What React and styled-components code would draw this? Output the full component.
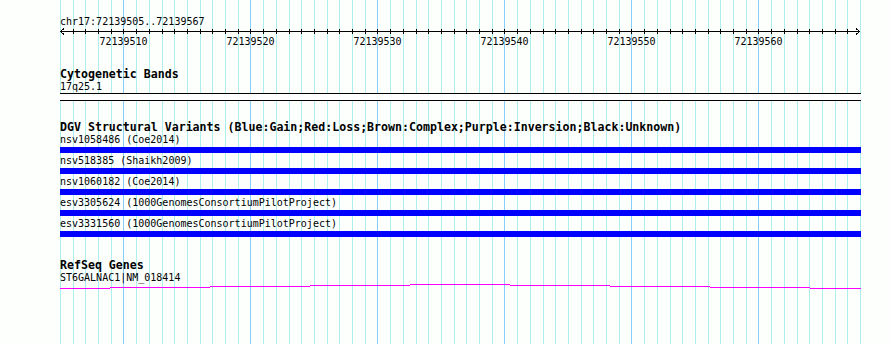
import React from 'react';
import styled, { createGlobalStyle } from 'styled-components';

const GlobalStyle = createGlobalStyle`
	html, body {
		margin: 0;
		padding: 0;
		background: #fdfffd;
	}
`;

// view: 63 bases drawn over 800px starting at x=60
const LEFT = 60;
const SPAN = 800;
const BASES = 63;
const START = 72139505;

const baseX = i => Math.round((i * SPAN) / BASES);

const variants = [
	{ id: 'nsv1058486', study: 'Coe2014' },
	{ id: 'nsv518385', study: 'Shaikh2009' },
	{ id: 'nsv1060182', study: 'Coe2014' },
	{ id: 'esv3305624', study: '1000GenomesConsortiumPilotProject' },
	{ id: 'esv3331560', study: '1000GenomesConsortiumPilotProject' },
];

// intron line steps (x from, x to, y offset)
const geneSteps = [
	[60, 110, 4],
	[110, 210, 3],
	[210, 310, 2],
	[310, 410, 1],
	[410, 510, 0],
	[510, 610, 1],
	[610, 710, 2],
	[710, 810, 3],
	[810, 861, 4],
];

const Grid = () => {
	const lines = [];
	for (let i = 0; i <= BASES; i++) {
		const major = (START + i) % 10 === 0;
		const x = LEFT + baseX(i) + 0.5;
		lines.push(
			<line
				key={i}
				x1={x}
				x2={x}
				y1={0}
				y2={344}
				stroke={major ? '#87cefa' : '#afeeee'}
				strokeWidth={1}
			/>
		);
	}
	return (
		<GridLayer width="890" height="344" shapeRendering="crispEdges">
			{lines}
		</GridLayer>
	);
};

const Ruler = () => {
	const ticks = [];
	const labels = [];
	for (let i = 1; i < BASES; i++) {
		const x = baseX(i) + 0.5;
		ticks.push(<line key={i} x1={x} x2={x} y1={1} y2={6} stroke="#000" />);
		if ((START + i) % 10 === 0) {
			labels.push(
				<RulerLabel key={i} x={x} y={17} textAnchor="middle">
					{START + i}
				</RulerLabel>
			);
		}
	}
	return (
		<RulerSvg width="802" height="20" shapeRendering="crispEdges">
			<line x1={0} x2={800} y1={3.5} y2={3.5} stroke="#000" />
			{ticks}
			<polyline points="4,0.5 0.5,3.5 4,6.5" fill="none" stroke="#000" />
			<polyline points="796,0.5 799.5,3.5 796,6.5" fill="none" stroke="#000" />
			{labels}
		</RulerSvg>
	);
};

const GeneLine = () => (
	<GeneSvg width="802" height="5" shapeRendering="crispEdges">
		{geneSteps.map(([x0, x1, y]) => (
			<rect key={x0} x={x0 - LEFT} y={y} width={x1 - x0} height={1} fill="#ff00ff" />
		))}
	</GeneSvg>
);

const App = () => (
	<React.Fragment>
		<GlobalStyle />
		<Panel>
			<Grid />
			<Tracks>
				<Header>chr17:72139505..72139567</Header>
				<Ruler />

				<Track>
					<TrackTitle>Cytogenetic Bands</TrackTitle>
					<FeatureLabel>17q25.1</FeatureLabel>
					<Band />
				</Track>

				<Track>
					<TrackTitle>
						DGV Structural Variants
						(Blue:Gain;Red:Loss;Brown:Complex;Purple:Inversion;Black:Unknown)
					</TrackTitle>
					{variants.map(v => (
						<Variant key={v.id}>
							<FeatureLabel>
								{v.id} ({v.study})
							</FeatureLabel>
							<Bar color="#0000ff" />
						</Variant>
					))}
				</Track>

				<Track>
					<TrackTitle>RefSeq Genes</TrackTitle>
					<FeatureLabel>ST6GALNAC1|NM_018414</FeatureLabel>
					<GeneLine />
				</Track>
			</Tracks>
		</Panel>
	</React.Fragment>
);

export default App;

const Panel = styled.div`
	position: relative;
	width: 890px;
	height: 344px;
	overflow: hidden;
	font-family: 'DejaVu Sans Mono', 'Liberation Mono', monospace;
	color: #000;
`;

const GridLayer = styled.svg`
	position: absolute;
	top: 0;
	left: 0;
	z-index: 0;
`;

const Tracks = styled.div`
	position: relative;
	z-index: 1;
	display: flex;
	flex-direction: column;
	width: 802px;
	padding: 16px 0 0 ${LEFT}px;
`;

const Header = styled.div`
	font-size: 10px;
	line-height: 12px;
	height: 12px;
	white-space: pre;
`;

const RulerSvg = styled.svg`
	display: block;
`;

const RulerLabel = styled.text`
	font-family: 'DejaVu Sans Mono', 'Liberation Mono', monospace;
	font-size: 10px;
	fill: #000;
`;

const Track = styled.section`
	display: flex;
	flex-direction: column;
	margin-top: 20px;
`;

const TrackTitle = styled.div`
	font-size: 11.6px;
	font-weight: bold;
	line-height: 13px;
	height: 13px;
	white-space: pre;
`;

const FeatureLabel = styled.div`
	font-size: 10px;
	line-height: 12px;
	height: 12px;
	white-space: pre;
`;

const Band = styled.div`
	width: 801px;
	height: 6px;
	border-top: 1px solid #000;
	border-bottom: 1px solid #000;
	background: #fff;
`;

const Variant = styled.div`
	display: flex;
	flex-direction: column;
	padding-bottom: 2px;
`;

const Bar = styled.div`
	width: 801px;
	height: 6px;
	margin-top: 1px;
	background: ${props => props.color};
`;

const GeneSvg = styled.svg`
	display: block;
`;
